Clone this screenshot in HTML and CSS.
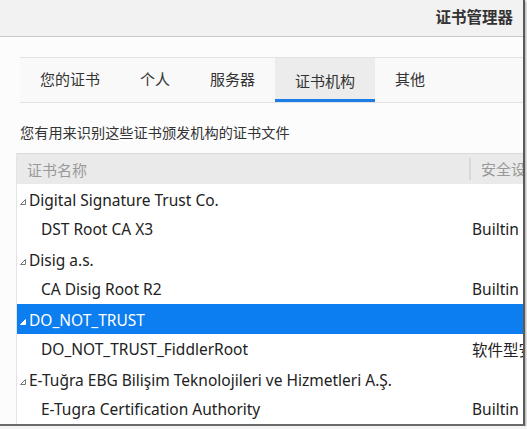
FILE: index.html
```html
<!DOCTYPE html>
<html lang="zh-CN">

<head>
    <meta charset="UTF-8">
    <title>证书管理器</title>
    <link rel="stylesheet" href="styles.css">
</head>

<body>
    <div class="window">
        <div class="titlebar">
            <span class="title">证书管理器</span>
        </div>

        <div class="content">
            <div class="tabs">
                <div class="tab">您的证书</div>
                <div class="tab">个人</div>
                <div class="tab">服务器</div>
                <div class="tab active">证书机构</div>
                <div class="tab">其他</div>
            </div>

            <p class="desc">您有用来识别这些证书颁发机构的证书文件</p>

            <div class="table">
                <div class="table-head">
                    <div class="col-name">证书名称</div>
                    <div class="col-sec">安全设备</div>
                </div>

                <div class="row group">
                    <div class="col-name"><span class="twisty"><svg width="6" height="6" viewBox="0 0 6 6"><path d="M5.5 0.5 L5.5 5.5 L0.5 5.5 Z" fill="none" stroke="#777" stroke-width="1"/></svg></span>Digital Signature Trust Co.</div>
                    <div class="col-sec"></div>
                </div>
                <div class="row child">
                    <div class="col-name">DST Root CA X3</div>
                    <div class="col-sec">Builtin Object Token</div>
                </div>
                <div class="row group">
                    <div class="col-name"><span class="twisty"><svg width="6" height="6" viewBox="0 0 6 6"><path d="M5.5 0.5 L5.5 5.5 L0.5 5.5 Z" fill="none" stroke="#777" stroke-width="1"/></svg></span>Disig a.s.</div>
                    <div class="col-sec"></div>
                </div>
                <div class="row child">
                    <div class="col-name">CA Disig Root R2</div>
                    <div class="col-sec">Builtin Object Token</div>
                </div>
                <div class="row group selected">
                    <div class="col-name"><span class="twisty"><svg width="6" height="6" viewBox="0 0 6 6"><path d="M5.5 0.5 L5.5 5.5 L0.5 5.5 Z" fill="#fff" stroke="#fff" stroke-width="1"/></svg></span>DO_NOT_TRUST</div>
                    <div class="col-sec"></div>
                </div>
                <div class="row child">
                    <div class="col-name">DO_NOT_TRUST_FiddlerRoot</div>
                    <div class="col-sec">软件型安全设备</div>
                </div>
                <div class="row group">
                    <div class="col-name"><span class="twisty"><svg width="6" height="6" viewBox="0 0 6 6"><path d="M5.5 0.5 L5.5 5.5 L0.5 5.5 Z" fill="none" stroke="#777" stroke-width="1"/></svg></span>E-Tuğra EBG Bilişim Teknolojileri ve Hizmetleri A.Ş.</div>
                    <div class="col-sec"></div>
                </div>
                <div class="row child">
                    <div class="col-name">E-Tugra Certification Authority</div>
                    <div class="col-sec">Builtin Object Token</div>
                </div>
            </div>
        </div>
    </div>
</body>

</html>
```

FILE: styles.css
```css
body {
    margin: 0;
    padding: 0;
    background-color: #f4f4f4;
    font-family: "Noto Sans", "Noto Sans CJK SC", sans-serif;
    color: #222;
}

.window {
    width: 523px;
    height: 424px;
    background: #fcfcfc;
    border-right: 2px solid #5a5a5a;
    border-bottom: 2px solid #6a6a6a;
    box-shadow: 1px 1px 2px rgba(0, 0, 0, 0.3);
    overflow: hidden;
}

.titlebar {
    height: 37px;
    box-sizing: border-box;
    background: #f2f2f2;
    border-bottom: 1px solid #c8c8c8;
    display: flex;
    justify-content: flex-end;
    padding: 5px 10px 0 0;
}

.title {
    font-family: "Noto Sans CJK SC", sans-serif;
    font-size: 15.5px;
    font-weight: bold;
    line-height: 22px;
    color: #333;
}

.content {
    padding-top: 20px;
}

.tabs {
    display: flex;
    margin-left: 20px;
    height: 44px;
    background: #f9f9f9;
    border-top: 1px solid #e2e2e2;
    border-bottom: 1px solid #e2e2e2;
}

.tab {
    display: flex;
    align-items: center;
    padding: 0 20px;
    font-family: "Noto Sans CJK SC", sans-serif;
    font-size: 15px;
    color: #333;
    box-sizing: border-box;
    border-bottom: 3px solid transparent;
}

.tab.active {
    background: #ececec;
    border-bottom-color: #1a7ee6;
    padding-top: 3px;
}

.desc {
    margin: 19px 0 0 20px;
    font-family: "Noto Sans CJK SC", sans-serif;
    font-size: 14.2px;
    color: #333;
    line-height: 20px;
}

.table {
    margin: 11px 0 0 16px;
    border-left: 1px solid #e4e4e4;
    background: #fff;
}

.table-head,
.row {
    display: flex;
    height: 30px;
    align-items: center;
}

.table-head {
    background: #eaeaea;
    border-top: 1px solid #dadada;
    color: #999;
    font-family: "Noto Sans CJK SC", sans-serif;
    font-size: 15px;
}

.table-head .col-name {
    padding-left: 10px;
}

.table-head .col-sec {
    border-left: 2px solid #d8d8d8;
    height: 22px;
    line-height: 22px;
    padding-left: 10px;
}

.col-name {
    width: 452px;
    flex-shrink: 0;
    white-space: nowrap;
    box-sizing: border-box;
}

.col-sec {
    white-space: nowrap;
    padding-left: 3px;
}

.row {
    font-size: 15.5px;
}

.row.group .col-name {
    padding-left: 3px;
}

.row.child .col-name {
    padding-left: 24px;
}

.twisty {
    display: inline-block;
    width: 9px;
    vertical-align: 1px;
}

.row.selected {
    background: #0c7ef0;
    color: #fff;
}
```
